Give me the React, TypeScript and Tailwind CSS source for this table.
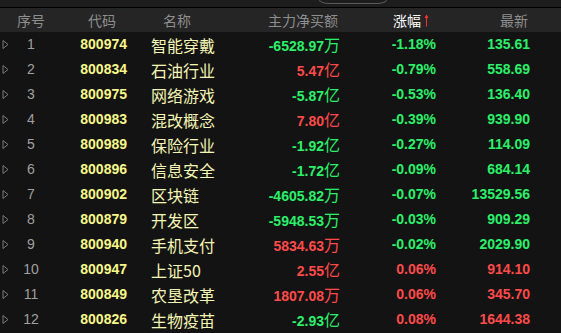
import React from "react";

type Row = {
  no: number;
  code: string;
  name: string;
  flow: string;
  unit: string;
  flowUp: boolean;
  pct: string;
  price: string;
  up: boolean;
};

const rows: Row[] = [
  { no: 1, code: "800974", name: "智能穿戴", flow: "-6528.97", unit: "万", flowUp: false, pct: "-1.18%", price: "135.61", up: false },
  { no: 2, code: "800834", name: "石油行业", flow: "5.47", unit: "亿", flowUp: true, pct: "-0.79%", price: "558.69", up: false },
  { no: 3, code: "800975", name: "网络游戏", flow: "-5.87", unit: "亿", flowUp: false, pct: "-0.53%", price: "136.40", up: false },
  { no: 4, code: "800983", name: "混改概念", flow: "7.80", unit: "亿", flowUp: true, pct: "-0.39%", price: "939.90", up: false },
  { no: 5, code: "800989", name: "保险行业", flow: "-1.92", unit: "亿", flowUp: false, pct: "-0.27%", price: "114.09", up: false },
  { no: 6, code: "800896", name: "信息安全", flow: "-1.72", unit: "亿", flowUp: false, pct: "-0.09%", price: "684.14", up: false },
  { no: 7, code: "800902", name: "区块链", flow: "-4605.82", unit: "万", flowUp: false, pct: "-0.07%", price: "13529.56", up: false },
  { no: 8, code: "800879", name: "开发区", flow: "-5948.53", unit: "万", flowUp: false, pct: "-0.03%", price: "909.29", up: false },
  { no: 9, code: "800940", name: "手机支付", flow: "5834.63", unit: "万", flowUp: true, pct: "-0.02%", price: "2029.90", up: false },
  { no: 10, code: "800947", name: "上证50", flow: "2.55", unit: "亿", flowUp: true, pct: "0.06%", price: "914.10", up: true },
  { no: 11, code: "800849", name: "农垦改革", flow: "1807.08", unit: "万", flowUp: true, pct: "0.06%", price: "345.70", up: true },
  { no: 12, code: "800826", name: "生物疫苗", flow: "-2.93", unit: "亿", flowUp: false, pct: "0.08%", price: "1644.38", up: true },
];

const cjk = "font-['Noto_Sans_CJK_SC',sans-serif]";
const num = "font-['Liberation_Sans',Arial,sans-serif] font-bold text-[14px]";

function Triangle() {
  return (
    <svg width="7" height="9" viewBox="0 0 7 9" className="ml-[2px]">
      <path d="M1 0.5 L6 4.5 L1 8.5 Z" fill="none" stroke="#7a7a7a" strokeWidth="1" />
    </svg>
  );
}

function UpArrow() {
  return (
    <svg width="5" height="13" viewBox="0 0 5 13" className="ml-[3px]">
      <path d="M2.5 0.5 L0.5 4 L4.5 4 Z" fill="#ff3030" />
      <path d="M2.5 3 L2.5 12.5" stroke="#ff3030" strokeWidth="1" />
    </svg>
  );
}

export default function App() {
  return (
    <div className="h-[333px] w-[561px] overflow-hidden bg-[#131313]">
      {/* top strip with tab edge */}
      <div className="h-[8px] border-b border-black bg-[#1d1d1d]">
        <div className="ml-[319px] h-[4px] w-[68px] rounded-b-[10px_4px] border border-t-0 border-[#5a5a5a]" />
      </div>

      {/* header */}
      <div className={`flex h-[24px] items-center bg-[#252525] text-[14px] text-[#8e8e8e] ${cjk}`}>
        <div className="w-[14px]" />
        <div className="w-[34px] text-center">序号</div>
        <div className="w-[92px] pr-[24px] text-right">代码</div>
        <div className="w-[90px] pl-[23px]">名称</div>
        <div className="w-[115px] pr-[7px] text-right">主力净买额</div>
        <div className="flex w-[100px] items-center justify-end pr-[16px] text-white">
          涨幅
          <UpArrow />
        </div>
        <div className="flex-1 pr-[33px] text-right">最新</div>
      </div>

      {/* rows */}
      {rows.map((r) => {
        const flowColor = r.flowUp ? "text-[#ff4a4a]" : "text-[#2bf06a]";
        const color = r.up ? "text-[#ff4a4a]" : "text-[#2bf06a]";
        return (
          <div key={r.no} className="flex h-[25px] items-center">
            <div className="flex w-[14px] items-center">
              <Triangle />
            </div>
            <div className="w-[34px] text-center font-['Liberation_Sans',Arial,sans-serif] text-[14px] text-[#a0a0a0]">
              {r.no}
            </div>
            <div className={`w-[92px] pr-[13px] text-right text-[#f8f88a] ${num}`}>{r.code}</div>
            <div className={`w-[90px] pl-[11px] text-[16px] text-[#f5f5b4] ${cjk}`}>{r.name}</div>
            <div className={`flex w-[115px] items-baseline justify-end pr-[5px] ${flowColor}`}>
              <span className={num}>{r.flow}</span>
              <span className={`text-[16px] ${cjk}`}>{r.unit}</span>
            </div>
            <div className={`w-[100px] pr-[9px] text-right ${num} ${color}`}>{r.pct}</div>
            <div className={`flex-1 pr-[31px] text-right ${num} ${color}`}>{r.price}</div>
          </div>
        );
      })}
    </div>
  );
}
